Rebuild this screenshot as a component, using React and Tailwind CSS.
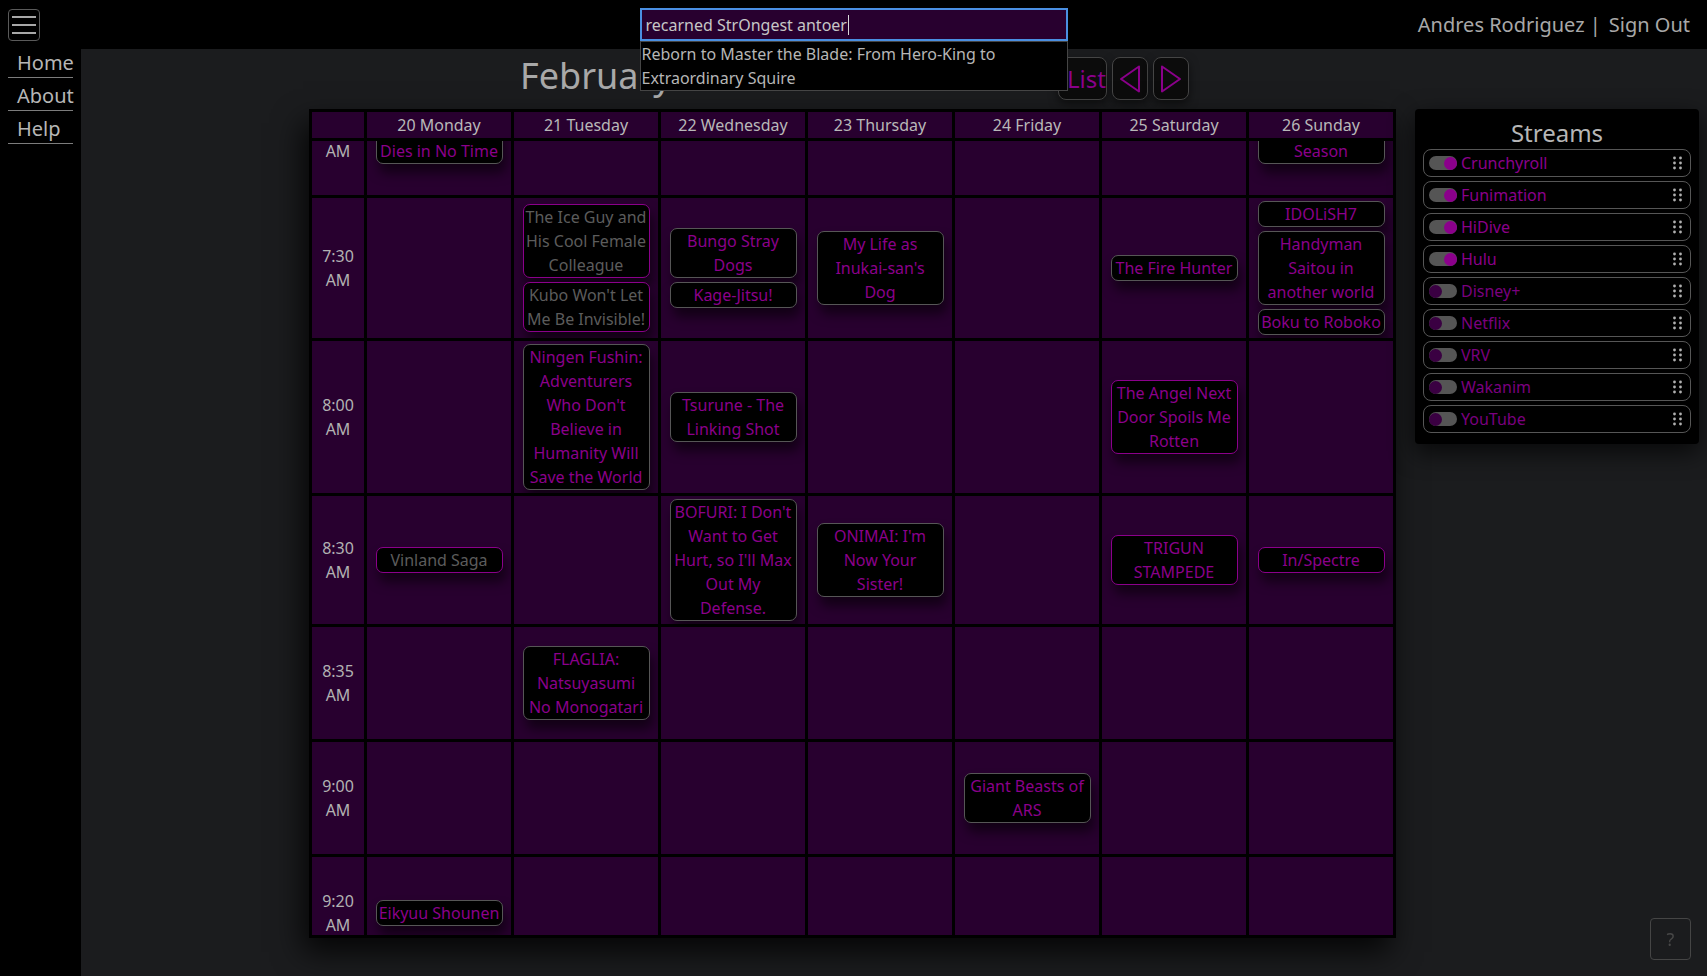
import { Fragment } from "react";

const days = [
  "20 Monday",
  "21 Tuesday",
  "22 Wednesday",
  "23 Thursday",
  "24 Friday",
  "25 Saturday",
  "26 Sunday",
];

// each row is one start time, shows keyed by day index
const rows = [
  {
    time: "7:00",
    shows: {
      0: [{ title: "The Vampire Dies in No Time" }],
      6: [{ title: "Mononogatari Season" }],
    },
  },
  {
    time: "7:30",
    shows: {
      1: [
        { title: "The Ice Guy and His Cool Female Colleague", kind: "seen" },
        { title: "Kubo Won't Let Me Be Invisible!", kind: "seen" },
      ],
      2: [{ title: "Bungo Stray Dogs" }, { title: "Kage-Jitsu!" }],
      3: [{ title: "My Life as Inukai-san's Dog" }],
      5: [{ title: "The Fire Hunter" }],
      6: [
        { title: "IDOLiSH7" },
        { title: "Handyman Saitou in another world" },
        { title: "Boku to Roboko" },
      ],
    },
  },
  {
    time: "8:00",
    shows: {
      1: [
        {
          title:
            "Ningen Fushin: Adventurers Who Don't Believe in Humanity Will Save the World",
        },
      ],
      2: [{ title: "Tsurune - The Linking Shot" }],
      5: [{ title: "The Angel Next Door Spoils Me Rotten", kind: "hot" }],
    },
  },
  {
    time: "8:30",
    shows: {
      0: [{ title: "Vinland Saga", kind: "seen" }],
      2: [
        {
          title: "BOFURI: I Don't Want to Get Hurt, so I'll Max Out My Defense.",
        },
      ],
      3: [{ title: "ONIMAI: I'm Now Your Sister!" }],
      5: [{ title: "TRIGUN STAMPEDE", kind: "hot" }],
      6: [{ title: "In/Spectre", kind: "hot" }],
    },
  },
  {
    time: "8:35",
    shows: { 1: [{ title: "FLAGLIA: Natsuyasumi No Monogatari" }] },
  },
  {
    time: "9:00",
    shows: { 4: [{ title: "Giant Beasts of ARS" }] },
  },
  {
    time: "9:20",
    shows: { 0: [{ title: "Eikyuu Shounen" }] },
  },
];

const streams = [
  { name: "Crunchyroll", on: true },
  { name: "Funimation", on: true },
  { name: "HiDive", on: true },
  { name: "Hulu", on: true },
  { name: "Disney+", on: false },
  { name: "Netflix", on: false },
  { name: "VRV", on: false },
  { name: "Wakanim", on: false },
  { name: "YouTube", on: false },
];

const showStyles = {
  base: "border-[#565656] text-[#8b008b]",
  seen: "border-[#8b008b] text-[#5c5c5c]",
  hot: "border-[#8b008b] text-[#8b008b]",
};

const Show = ({ title, kind = "base" }) => (
  <div
    className={`w-[127px] rounded-[7px] border bg-black px-px text-center text-base leading-6 shadow-[3px_9px_12px_rgba(0,0,0,0.55)] ${showStyles[kind]}`}
  >
    {title}
  </div>
);

const Grip = () => (
  <svg width="9" height="14" viewBox="0 0 9 14" className="shrink-0">
    {[2, 7, 12].map((y) => (
      <Fragment key={y}>
        <circle cx="1.5" cy={y} r="1.4" fill="#b0b0b0" />
        <circle cx="7.5" cy={y} r="1.4" fill="#b0b0b0" />
      </Fragment>
    ))}
  </svg>
);

const Arrow = ({ dir }) => (
  <svg width="22" height="28" viewBox="0 0 22 28" fill="none">
    <polygon
      points={dir === "left" ? "20,1.5 2,14 20,26.5" : "2,1.5 20,14 2,26.5"}
      stroke="#8b008b"
      strokeWidth="2"
      strokeLinejoin="round"
    />
  </svg>
);

export default function App() {
  return (
    <div className="flex h-screen flex-col overflow-hidden bg-black font-['Noto_Sans',sans-serif]">
      {/* Top bar */}
      <header className="relative z-20 grid h-[49px] shrink-0 grid-cols-[1fr_auto_1fr] items-center bg-black">
        <div className="pl-2">
          <button
            className="flex h-8 w-8 flex-col items-center justify-center gap-[6px] rounded-[4px] border border-[#5a5a5a]"
            aria-label="Menu"
          >
            <span className="h-[2px] w-6 bg-[#a8a8a8]" />
            <span className="h-[2px] w-6 bg-[#a8a8a8]" />
            <span className="h-[2px] w-6 bg-[#a8a8a8]" />
          </button>
        </div>

        <div className="relative w-[428px]">
          <div className="flex h-[33px] items-center border-2 border-[#4a8fe2] bg-[#28002f] px-[4px] text-base text-[#c6c6c6]">
            recarned StrOngest antoer
            <span className="ml-px h-[20px] w-px bg-[#d8d8d8]" />
          </div>
          <ul className="absolute left-0 top-full w-full border border-[#454545] bg-black pl-px text-base leading-6 text-[#b6b6b6]">
            <li>Reborn to Master the Blade: From Hero-King to Extraordinary Squire</li>
          </ul>
        </div>

        <div className="flex justify-end pr-[17px] text-[20px] text-[#a8a8a8]">
          <span>Andres Rodriguez |</span>
          <a className="ml-[8px]">Sign Out</a>
        </div>
      </header>

      <div className="flex flex-1">
        {/* Side nav */}
        <nav className="flex w-[81px] shrink-0 flex-col gap-[4px] bg-black">
          {["Home", "About", "Help"].map((link) => (
            <a
              key={link}
              className="ml-2 w-[65px] border-b border-[#7c7c7c] pl-[9px] text-[20px] leading-[28px] text-[#b6b6b6]"
            >
              {link}
            </a>
          ))}
        </nav>

        <main className="flex flex-1 items-start justify-end gap-[19px] bg-[#1b1c1e] pr-2">
          <section className="flex flex-col gap-[9px] pt-2">
            {/* Month heading + view buttons */}
            <div className="flex h-[43px] items-start pl-[211px]">
              <h1 className="w-[538px] text-[36px] leading-[38px] text-[#a9a9a9]">
                February 2023
              </h1>
              <div className="flex gap-[5px]">
                <button className="h-[43px] w-[49px] rounded-[8px] border border-[#454545] bg-[#0c0c0c] pl-[8px] text-left text-[24px] text-[#8b008b] shadow-[0_4px_10px_rgba(0,0,0,0.5)]">
                  List
                </button>
                <button className="flex h-[43px] w-[36px] items-center justify-center rounded-[8px] border border-[#454545] bg-[#0c0c0c] shadow-[0_4px_10px_rgba(0,0,0,0.5)]">
                  <Arrow dir="left" />
                </button>
                <button className="flex h-[43px] w-[36px] items-center justify-center rounded-[8px] border border-[#454545] bg-[#0c0c0c] shadow-[0_4px_10px_rgba(0,0,0,0.5)]">
                  <Arrow dir="right" />
                </button>
              </div>
            </div>

            {/* Week grid */}
            <div className="bg-black p-[3px] shadow-[-6px_14px_28px_rgba(0,0,0,0.8)]">
              <div className="grid grid-cols-[52px_repeat(7,144px)] gap-[3px]">
                <div className="h-[26px] bg-[#28002f]" />
                {days.map((d) => (
                  <div
                    key={d}
                    className="bg-[#28002f] text-center text-base leading-[26px] text-[#b8b8b8]"
                  >
                    {d}
                  </div>
                ))}
              </div>

              <div className="mt-[3px] h-[794px] overflow-hidden">
                <div className="-mt-[58px] grid grid-cols-[52px_repeat(7,144px)] gap-[3px]">
                  {rows.map((row) => (
                    <Fragment key={row.time}>
                      <div className="flex min-h-[112px] flex-col items-center justify-center bg-[#28002f] text-base leading-6 text-[#b2b2b2]">
                        <span>{row.time}</span>
                        <span>AM</span>
                      </div>
                      {days.map((d, i) => (
                        <div
                          key={d}
                          className="flex min-h-[112px] flex-col items-center justify-center gap-1 bg-[#28002f] py-[3px]"
                        >
                          {(row.shows[i] || []).map((s) => (
                            <Show key={s.title} title={s.title} kind={s.kind} />
                          ))}
                        </div>
                      ))}
                    </Fragment>
                  ))}
                </div>
              </div>
            </div>
          </section>

          {/* Streams panel */}
          <aside className="mt-[60px] w-[284px] rounded-[4px] bg-black px-2 pb-[11px] pt-2 shadow-[0_8px_24px_rgba(0,0,0,0.7)]">
            <h2 className="text-center text-[24px] leading-8 text-[#b6b6b6]">Streams</h2>
            <ul className="flex flex-col gap-1">
              {streams.map((s) => (
                <li
                  key={s.name}
                  className="flex h-[28px] items-center rounded-[8px] border border-[#565656] pl-[5px] pr-[8px]"
                >
                  <span
                    className={`flex h-[14px] w-[28px] shrink-0 items-center rounded-full bg-[#555] ${
                      s.on ? "justify-end" : "justify-start"
                    }`}
                  >
                    <span
                      className={`h-[13px] w-[13px] rounded-full ${
                        s.on ? "bg-[#8b008b]" : "bg-[#3a0042]"
                      }`}
                    />
                  </span>
                  <span
                    className={`ml-1 flex-1 text-base ${
                      s.on ? "text-[#8b008b]" : "text-[#7a007f]"
                    }`}
                  >
                    {s.name}
                  </span>
                  <Grip />
                </li>
              ))}
            </ul>
          </aside>
        </main>
      </div>

      <button className="fixed bottom-4 right-4 h-[42px] w-[41px] rounded-[4px] border border-[#454545] text-lg text-[#474747]">
        ?
      </button>
    </div>
  );
}
